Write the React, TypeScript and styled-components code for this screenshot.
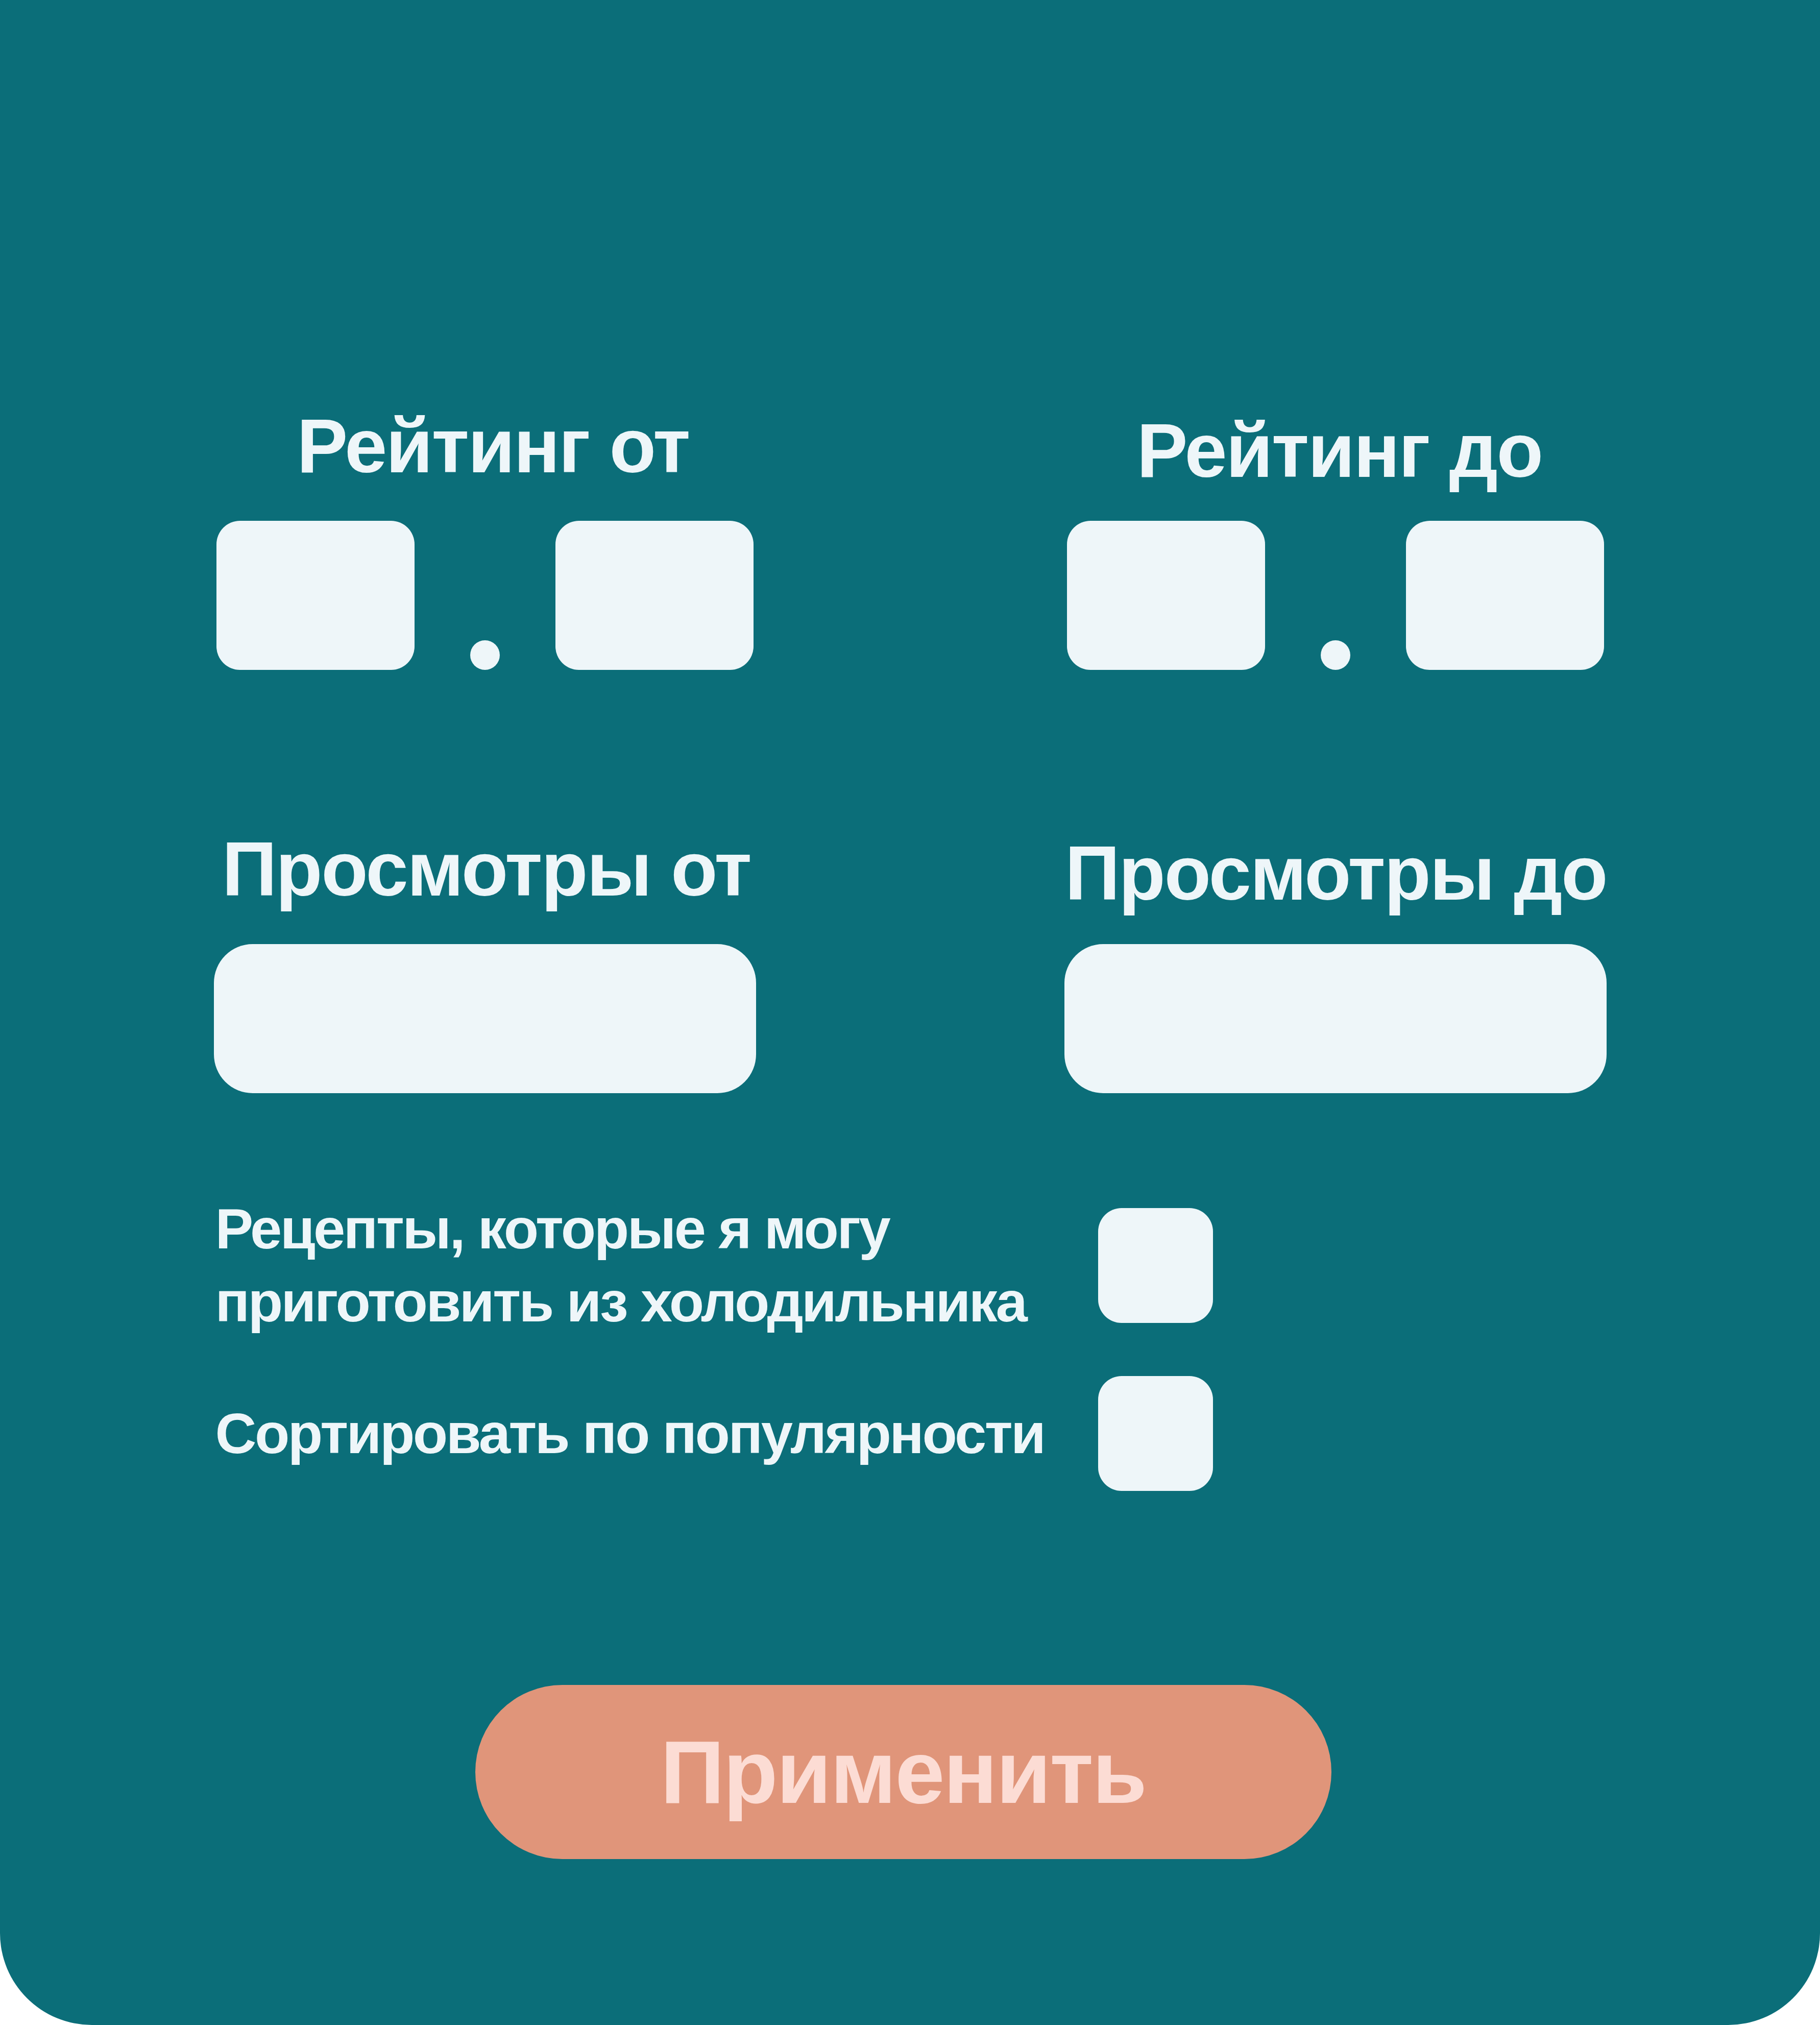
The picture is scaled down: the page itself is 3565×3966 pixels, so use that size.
import React from "react"
import styled, { createGlobalStyle } from "styled-components"

const GlobalStyle = createGlobalStyle`
  html,
  body {
    margin: 0;
    padding: 0;
    background: #ffffff;
  }

  body {
    font-family: "Liberation Sans", Arial, sans-serif;
  }
`

const Panel = styled.div`
  width: 3565px;
  height: 3966px;
  box-sizing: border-box;
  padding-top: 798px;
  background: #0b6e79;
  border-radius: 0 0 180px 180px;
`

const Content = styled.div`
  width: 2728px;
  margin: 0 auto;
`

const FieldGrid = styled.div`
  display: grid;
  grid-template-columns: 1062px 1062px;
  column-gap: 604px;
  row-gap: 315px;
`

const Field = styled.div`
  display: flex;
  flex-direction: column;
  align-items: center;
`

/* $drop / $shift: the titles of the original sit a few px off their column centre */
const FieldTitle = styled.div<{ $drop?: number; $shift?: number }>`
  margin-top: ${props => props.$drop || 0}px;
  margin-bottom: ${props => 72 - (props.$drop || 0)}px;
  margin-left: ${props => (props.$shift || 0) * 2}px;
  font-size: 150px;
  line-height: 1;
  font-weight: 700;
  letter-spacing: -2.5px;
  color: #eef6f9;
  white-space: nowrap;
`

const RatingRow = styled.div`
  display: flex;
  align-items: flex-end;
  gap: 109px;
`

const RatingInput = styled.input`
  width: 388px;
  height: 292px;
  box-sizing: border-box;
  border: none;
  border-radius: 46px;
  background: #eef6f9;
  outline: none;
`

const Dot = styled.span`
  width: 58px;
  height: 58px;
  border-radius: 50%;
  background: #eef6f9;
`

const WideInput = styled.input`
  width: 100%;
  height: 292px;
  box-sizing: border-box;
  border: none;
  border-radius: 76px;
  background: #eef6f9;
  outline: none;
`

const Options = styled.div`
  display: flex;
  flex-direction: column;
  gap: 74px;
  margin-top: 194px;
  padding-left: 3px;
`

const OptionRow = styled.label`
  display: flex;
  align-items: center;
`

const OptionText = styled.span`
  width: 1729px;
  font-size: 112px;
  line-height: 143px;
  font-weight: 700;
  letter-spacing: -3.5px;
  color: #eef6f9;
`

const CheckBox = styled.input`
  appearance: none;
  margin: 0;
  width: 225px;
  height: 225px;
  border-radius: 46px;
  background: #eef6f9;
`

const ApplyButton = styled.button`
  display: block;
  width: 1677px;
  height: 341px;
  margin: 380px 0 0 512px;
  padding: 0;
  border: none;
  border-radius: 171px;
  background: #e0957a;
  color: #fcdcd4;
  font-family: "Liberation Sans", Arial, sans-serif;
  font-size: 175px;
  font-weight: 700;
  letter-spacing: -2.5px;
  line-height: 1;
`

type FieldProps = { title: string; drop?: number; shift?: number }

const RatingField = ({ title, drop, shift }: FieldProps) => (
  <Field>
    <FieldTitle $drop={drop} $shift={shift}>
      {title}
    </FieldTitle>
    <RatingRow>
      <RatingInput type="text" />
      <Dot />
      <RatingInput type="text" />
    </RatingRow>
  </Field>
)

const ViewsField = ({ title, drop, shift }: FieldProps) => (
  <Field>
    <FieldTitle $drop={drop} $shift={shift}>
      {title}
    </FieldTitle>
    <WideInput type="text" />
  </Field>
)

const App = () => {
  return (
    <>
      <GlobalStyle />
      <Panel>
        <Content>
          <FieldGrid>
            <RatingField title="Рейтинг от" shift={16} />
            <RatingField title="Рейтинг до" drop={9} shift={8} />
            <ViewsField title="Просмотры от" shift={3} />
            <ViewsField title="Просмотры до" drop={8} shift={1} />
          </FieldGrid>

          <Options>
            <OptionRow>
              <OptionText>
                Рецепты, которые я могу
                <br />
                приготовить из холодильника
              </OptionText>
              <CheckBox type="checkbox" />
            </OptionRow>
            <OptionRow>
              <OptionText>Сортировать по популярности</OptionText>
              <CheckBox type="checkbox" />
            </OptionRow>
          </Options>

          <ApplyButton type="button">Применить</ApplyButton>
        </Content>
      </Panel>
    </>
  )
}

export default App
